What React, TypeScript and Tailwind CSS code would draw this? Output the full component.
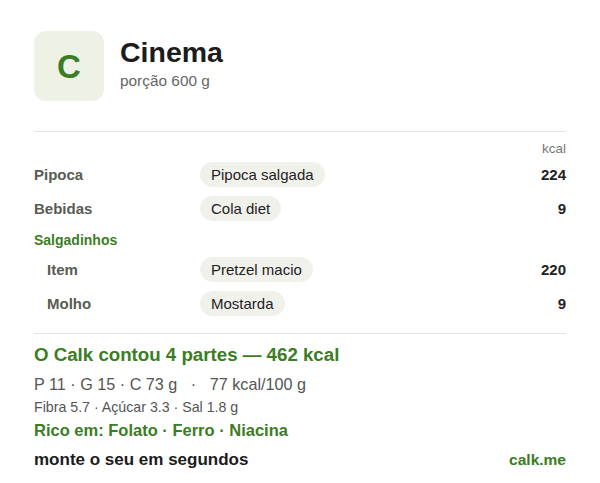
import React from "react";

const font = { fontFamily: '"Liberation Sans", Arial, sans-serif' };

function Row({ label, item, kcal, indent }: { label: string; item: string; kcal: string; indent?: boolean }) {
  return (
    <div className="flex h-[34px] items-center">
      <div className={`w-[166px] shrink-0 text-[15px] font-bold leading-[17px] text-[#585c52] ${indent ? "pl-[13px]" : ""}`}>{label}</div>
      <div className="flex-1">
        <span className="inline-block rounded-full bg-[#f1f1ec] px-[11px] py-[4px] text-[15px] leading-[17px] text-[#222]">{item}</span>
      </div>
      <div className="text-[15px] font-bold leading-[17px] text-[#222]">{kcal}</div>
    </div>
  );
}

export default function App() {
  return (
    <div className="h-[483px] w-[600px] bg-white px-[34px] pt-[31px]" style={font}>
      <div className="flex items-start gap-4">
        <div className="flex h-[70px] w-[70px] items-center justify-center rounded-[12px] bg-[#eef1e6]">
          <span className="text-[33px] font-bold leading-none text-[#3b7d23]">C</span>
        </div>
        <div className="mt-[5px] flex flex-col">
          <div className="text-[28.5px] font-bold leading-[32px] text-[#1c1c1c]">Cinema</div>
          <div className="mt-[3px] text-[15.4px] leading-[20px] text-[#666]">porção 600 g</div>
        </div>
      </div>
      <div className="mt-[30px] h-px bg-[#e4e4df]" />
      <div className="mt-[9px] text-right text-[13.5px] leading-[16px] text-[#777]">kcal</div>
      <Row label="Pipoca" item="Pipoca salgada" kcal="224" />
      <Row label="Bebidas" item="Cola diet" kcal="9" />
      <div className="mb-[4px] pt-[7px] text-[14px] font-bold leading-[16px] text-[#3b7d23]">Salgadinhos</div>
      <Row label="Item" item="Pretzel macio" kcal="220" indent />
      <Row label="Molho" item="Mostarda" kcal="9" indent />
      <div className="mt-[13px] h-px bg-[#e4e4df]" />
      <div className="mt-[10px] text-[18.7px] font-bold leading-[22px] text-[#3b7d23]">O Calk contou 4 partes — 462 kcal</div>
      <div className="mt-[7px] whitespace-pre text-[16.2px] leading-[22px] text-[#555]">{"P 11 · G 15 · C 73 g   ·   77 kcal/100 g"}</div>
      <div className="mt-[3px] text-[14.2px] leading-[18px] text-[#555]">Fibra 5.7 · Açúcar 3.3 · Sal 1.8 g</div>
      <div className="mt-[4px] text-[16.5px] font-bold leading-[20px] text-[#3b7d23]">Rico em: Folato · Ferro · Niacina</div>
      <div className="mt-[10px] flex items-baseline justify-between leading-[20px]">
        <span className="text-[17px] font-bold text-[#1c1c1c]">monte o seu em segundos</span>
        <span className="text-[15.5px] font-bold text-[#3b7d23]">calk.me</span>
      </div>
    </div>
  );
}
